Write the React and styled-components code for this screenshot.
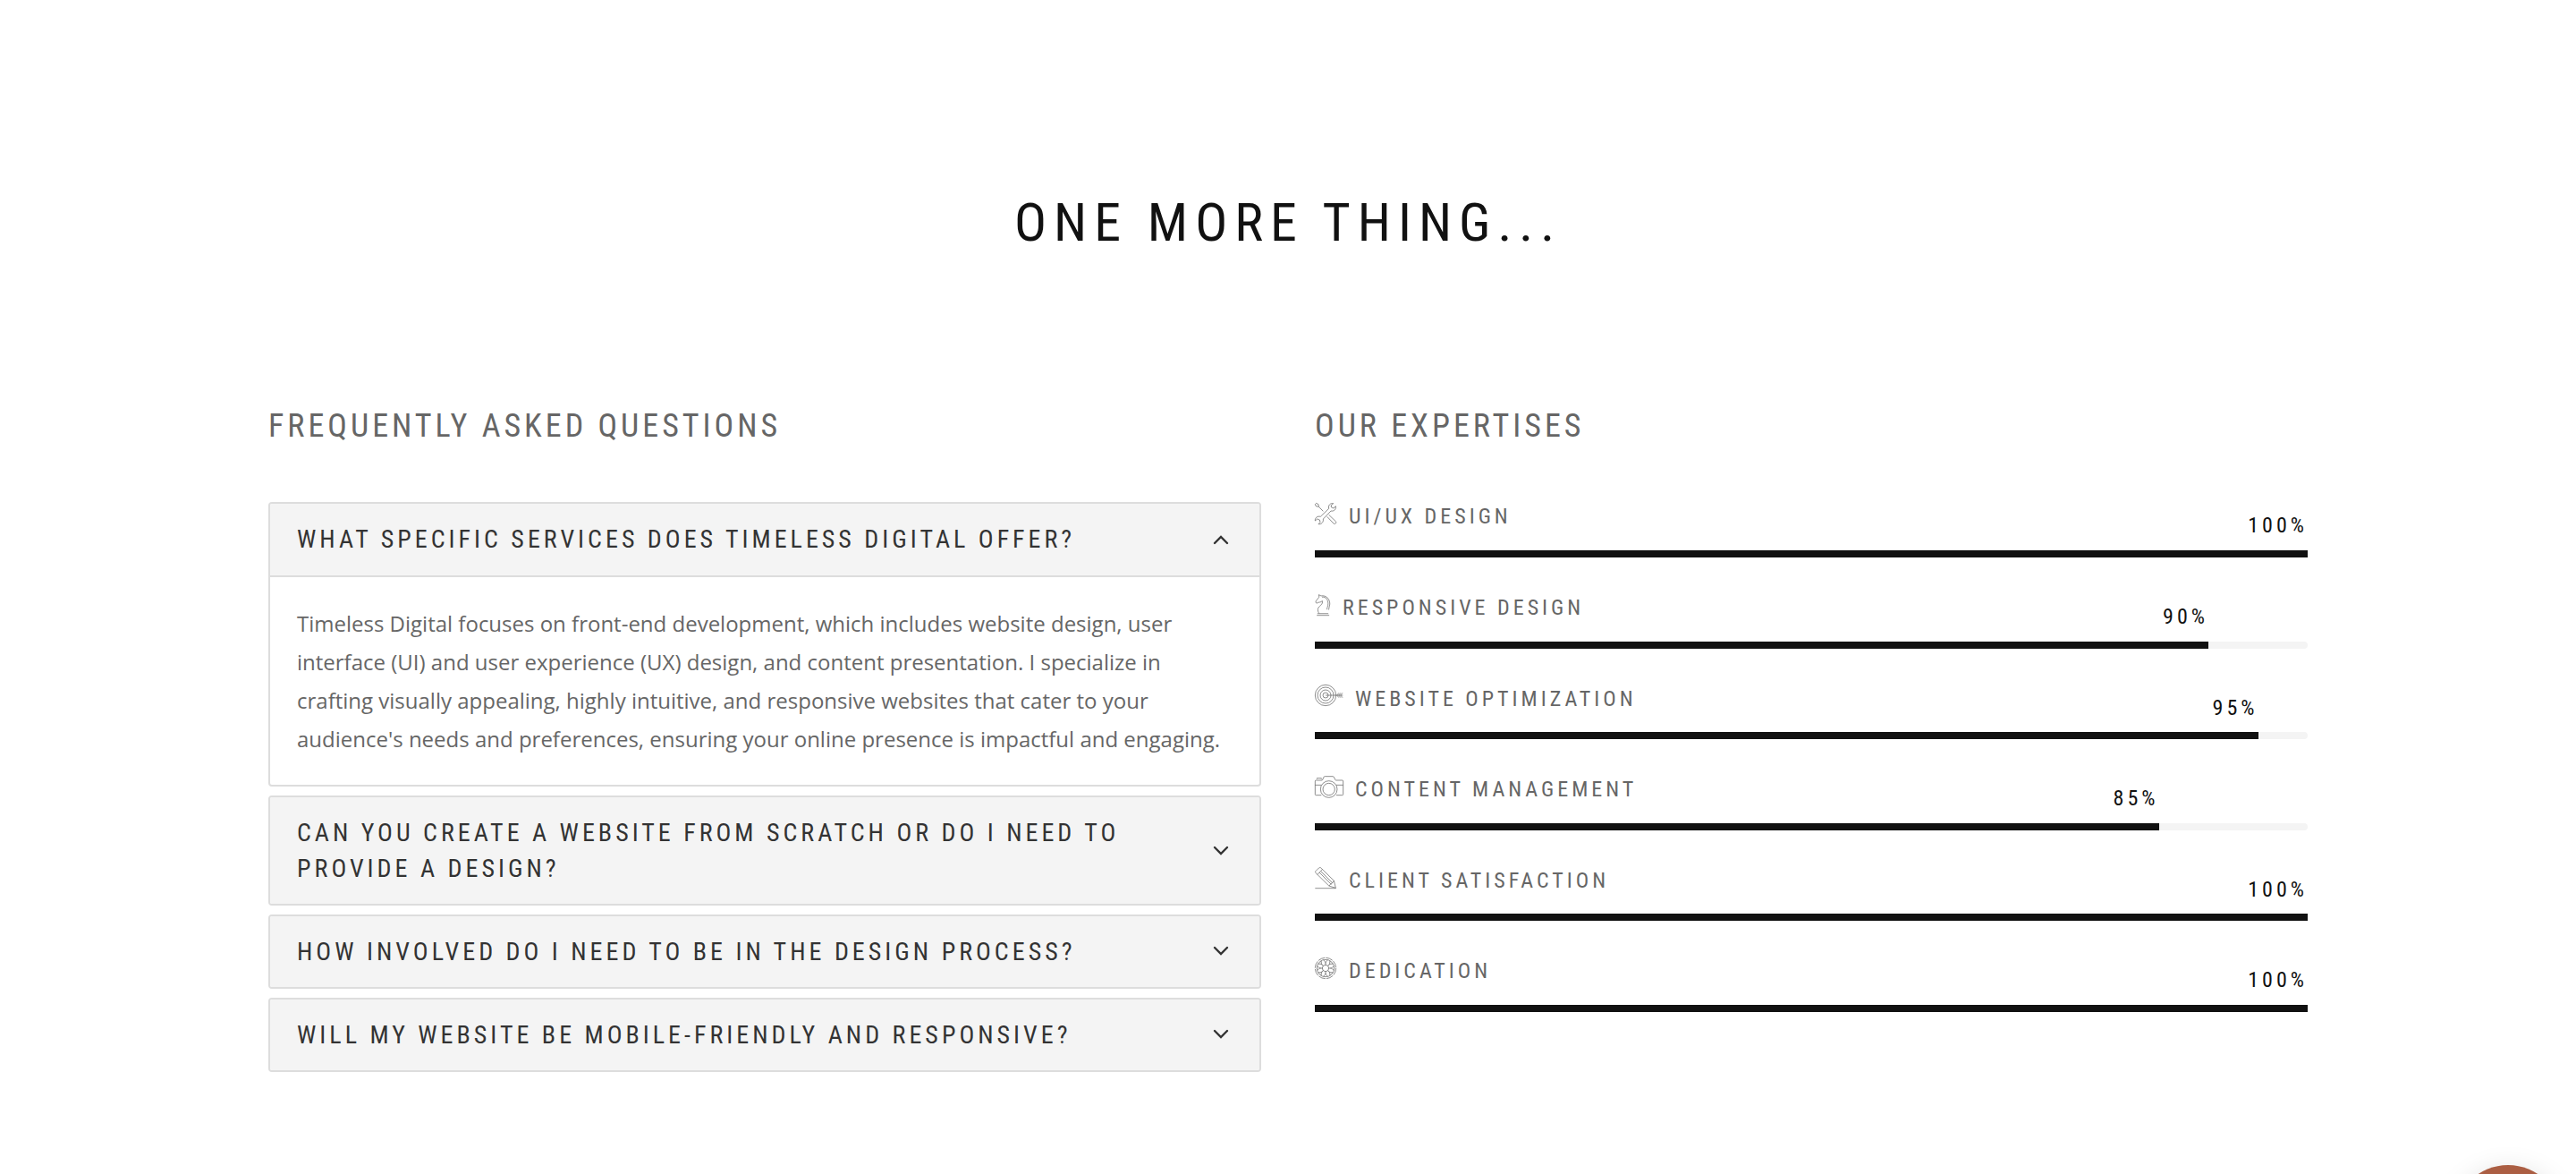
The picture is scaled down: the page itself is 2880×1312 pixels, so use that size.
import React, { useState } from "react";
import styled, { createGlobalStyle } from "styled-components";

const GlobalStyle = createGlobalStyle`
  *, *::before, *::after { box-sizing: border-box; }
  body {
    margin: 0;
    background: #fff;
    color: #666;
    font-family: "Open Sans", "Noto Sans", sans-serif;
    overflow-x: hidden;
  }
  h2, h3, p, ul { margin: 0; padding: 0; }
`;

const headingFont = `"Roboto Condensed", "Liberation Sans Narrow", Roboto, sans-serif`;

const Section = styled.section`
  max-width: 2400px;
  margin: 0 auto;
  padding: 207px 60px 100px;
`;

const Title = styled.h2`
  margin-bottom: 160px;
  color: #111;
  font: 400 60px/1.4 ${headingFont};
  letter-spacing: 8px;
  text-align: center;
  text-transform: uppercase;
`;

const Columns = styled.div`
  display: grid;
  grid-template-columns: repeat(auto-fit, minmax(min(100%, 640px), 1fr));
  gap: 60px;
  align-items: start;
`;

const ColumnTitle = styled.h3`
  margin-bottom: 60px;
  color: #666;
  font: 400 36px/1.4 ${headingFont};
  letter-spacing: 4px;
  text-transform: uppercase;
`;

const Accordion = styled.div`
  display: flex;
  flex-direction: column;
  gap: 10px;
`;

const Item = styled.div`
  border: 2px solid #ddd;
  border-radius: 4px;
  overflow: hidden;
`;

const Question = styled.button`
  display: flex;
  align-items: center;
  justify-content: space-between;
  gap: 40px;
  width: 100%;
  padding: 20px 33px 20px 30px;
  border: 0;
  background: #f4f4f4;
  color: #333;
  font: 400 28px/1.4 ${headingFont};
  letter-spacing: 4px;
  text-align: left;
  text-transform: uppercase;
  cursor: pointer;
`;

const Chevron = styled.svg`
  flex: none;
  width: 20px;
  height: 20px;
  transform: ${(p) => (p.$open ? "rotate(180deg)" : "none")};
`;

const Answer = styled.p`
  padding: 30px;
  border-top: 2px solid #ddd;
  font-size: 24px;
  line-height: 1.8;
`;

const Skills = styled.ul`
  display: flex;
  flex-direction: column;
  gap: 40px;
  list-style: none;
`;

const SkillLabel = styled.div`
  display: flex;
  align-items: center;
  gap: 14px;
  margin-bottom: 20px;
  font: 400 24px/1.4 ${headingFont};
  letter-spacing: 4px;
  text-transform: uppercase;
`;

const SkillIcon = styled.svg`
  flex: none;
  height: 24px;
  margin-bottom: 8px;
  overflow: visible;
  fill: none;
  stroke: #555;
  stroke-width: 2;
  stroke-linejoin: round;
`;

const Track = styled.div`
  height: 8px;
  border-radius: 0 4px 4px 0;
  background: #f4f4f4;
`;

const Fill = styled.div`
  position: relative;
  height: 100%;
  background: #111;
`;

const Value = styled.span`
  position: absolute;
  right: 0;
  bottom: 18px;
  color: #111;
  font: 400 24px/1.4 ${headingFont};
  letter-spacing: 4px;
`;

const FloatingButton = styled.button`
  position: fixed;
  right: 16px;
  bottom: -110px;
  width: 120px;
  height: 120px;
  border: 0;
  border-radius: 50%;
  background: #ab5e43;
  box-shadow: 0 8px 32px rgba(0, 0, 0, 0.15);
  cursor: pointer;
`;

const faqs = [
  {
    q: "What specific services does Timeless Digital offer?",
    a: "Timeless Digital focuses on front-end development, which includes website design, user interface (UI) and user experience (UX) design, and content presentation. I specialize in crafting visually appealing, highly intuitive, and responsive websites that cater to your audience's needs and preferences, ensuring your online presence is impactful and engaging.",
  },
  {
    q: "Can you create a website from scratch or do I need to provide a design?",
    a: "Both are possible. I can start from a blank page or build on a design that you already have.",
  },
  {
    q: "How involved do I need to be in the design process?",
    a: "As much as you like. Your feedback is welcome at every stage.",
  },
  {
    q: "Will my website be mobile-friendly and responsive?",
    a: "Yes. Every website is built for phones, tablets and desktops.",
  },
];

const ToolsIcon = () => (
  <SkillIcon viewBox="0 0 72 72" width="24" aria-hidden="true">
    <path d="M62 2C52 0 44 8 47 19L19 46C9 43 0 50 1 60L8 54L16 57L18 65L12 71C22 73 30 64 28 54L54 27C64 29 72 22 70 11L63 18L56 15L54 9Z" />
    <path d="M1 5L5 1L12 5L13 11L9 13L3 10ZM12 12L28 28M41 46L63 69C68 73 74 67 70 62L47 40" />
  </SkillIcon>
);

const KnightIcon = () => (
  <SkillIcon viewBox="0 0 51 74" width="17" aria-hidden="true">
    <path d="M14 10L13 2L21 6C38 3 51 16 51 34C51 42 47 46 47 54" />
    <path d="M24 10C38 8 45 20 45 33C45 42 41 46 41 53" />
    <path d="M14 10L3 24C1 29 5 33 9 30C13 26 20 30 25 23C29 36 13 40 10 50C9 57 11 62 14 66" />
    <path d="M8 67H46M6 73H49" />
  </SkillIcon>
);

const TargetIcon = () => (
  <SkillIcon viewBox="0 0 93 72" width="31" aria-hidden="true">
    <circle cx="36" cy="36" r="35" />
    <circle cx="36" cy="36" r="27" />
    <circle cx="36" cy="36" r="18" />
    <circle cx="36" cy="36" r="9" />
    <path d="M36 36H94M81 28L74 36L81 44M87 28L80 36L87 44M93 28L86 36L93 44" />
  </SkillIcon>
);

const CameraIcon = () => (
  <SkillIcon viewBox="0 0 93 72" width="31" aria-hidden="true">
    <path d="M22 65H4Q1 65 1 62V18Q1 15 4 15H24C29 15 26 2 34 2H60C68 2 65 15 71 15H92Q95 15 95 18V62Q95 65 92 65H72" />
    <path d="M7 11V8H22V11M1 31H22M72 31H95" />
    <circle cx="47" cy="45" r="28" />
    <circle cx="47" cy="45" r="20" />
  </SkillIcon>
);

const PencilIcon = () => (
  <SkillIcon viewBox="0 0 72 74" width="24" aria-hidden="true">
    <path d="M2 20C0 18 0 16 2 14L13 3C15 1 18 1 20 3L65 47L71 72L48 65Z" />
    <path d="M8 26L25 8M15 19L56 60M20 15L60 55M48 65L54 58L60 54L65 47M0 73H72" />
  </SkillIcon>
);

const WheelIcon = () => (
  <SkillIcon viewBox="0 0 72 72" width="24" aria-hidden="true">
    <circle cx="36" cy="36" r="35" strokeDasharray="24 3.5" />
    <circle cx="36" cy="36" r="29" />
    <circle cx="36" cy="36" r="11" />
    {[0, 45, 90, 135, 180, 225, 270, 315].map((a) => (
      <path key={a} transform={`rotate(${a} 36 36)`} d="M36 25V20C36 15 32 12 29 8M36 20C36 15 40 12 43 8" />
    ))}
  </SkillIcon>
);

const skills = [
  { name: "UI/UX Design", value: 100, Icon: ToolsIcon },
  { name: "Responsive Design", value: 90, Icon: KnightIcon },
  { name: "Website Optimization", value: 95, Icon: TargetIcon },
  { name: "Content Management", value: 85, Icon: CameraIcon },
  { name: "Client Satisfaction", value: 100, Icon: PencilIcon },
  { name: "Dedication", value: 100, Icon: WheelIcon },
];

export default function App() {
  const [open, setOpen] = useState(0);
  return (
    <>
      <GlobalStyle />
      <Section>
        <Title>One more thing...</Title>
        <Columns>
          <div>
            <ColumnTitle>Frequently asked questions</ColumnTitle>
            <Accordion>
              {faqs.map((f, i) => (
                <Item key={f.q}>
                  <Question aria-expanded={open === i} onClick={() => setOpen(open === i ? -1 : i)}>
                    {f.q}
                    <Chevron $open={open === i} viewBox="0 0 20 20" aria-hidden="true">
                      <path d="M3 6L10 13L17 6" fill="none" stroke="#333" strokeWidth="2.4" strokeLinecap="round" />
                    </Chevron>
                  </Question>
                  {open === i && <Answer>{f.a}</Answer>}
                </Item>
              ))}
            </Accordion>
          </div>
          <div>
            <ColumnTitle>Our expertises</ColumnTitle>
            <Skills>
              {skills.map(({ name, value, Icon }) => (
                <li key={name}>
                  <SkillLabel>
                    <Icon />
                    {name}
                  </SkillLabel>
                  <Track role="progressbar" aria-label={name} aria-valuenow={value} aria-valuemin={0} aria-valuemax={100}>
                    <Fill style={{ width: `${value}%` }}>
                      <Value>{value}%</Value>
                    </Fill>
                  </Track>
                </li>
              ))}
            </Skills>
          </div>
        </Columns>
      </Section>
      <FloatingButton aria-label="Open chat" />
    </>
  );
}
